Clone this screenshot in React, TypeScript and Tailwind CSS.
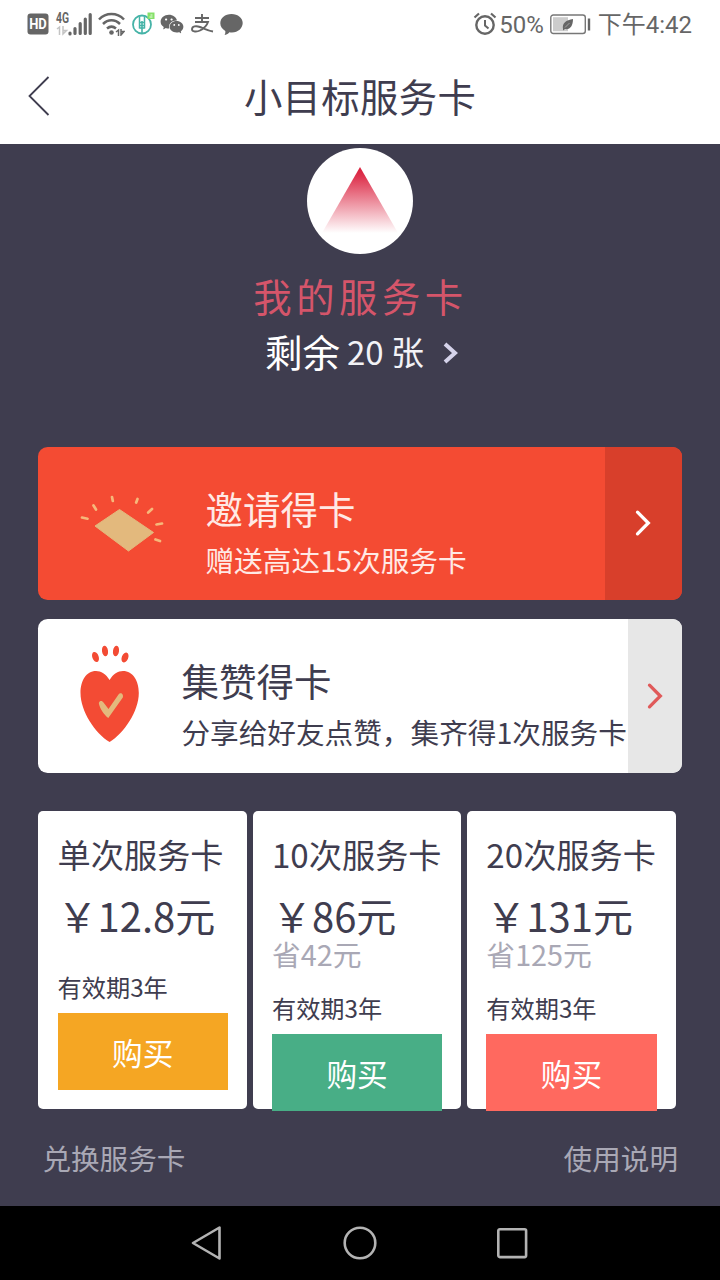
import { AiFillWechat } from "react-icons/ai";
import { clsx } from "clsx";

interface Plan {
  name: string;
  price: string;
  saving?: string;
  buttonClass: string;
}

const plans: Plan[] = [
  { name: "单次服务卡", price: "￥12.8元", buttonClass: "bg-[#f5a623]" },
  { name: "10次服务卡", price: "￥86元", saving: "省42元", buttonClass: "bg-[#48ae86]" },
  { name: "20次服务卡", price: "￥131元", saving: "省125元", buttonClass: "bg-[#ff695f]" },
];

function StatusBar() {
  return (
    <div className="flex h-12 shrink-0 items-center justify-between pr-7 pl-[27px] text-[#666]">
      <div className="flex items-center">
        <svg width="22" height="22" viewBox="0 0 22 22">
          <rect x="0.5" y="0.5" width="21" height="21" rx="3" fill="#666" />
          <text
            x="2.2"
            y="16"
            textLength="17.6"
            lengthAdjust="spacingAndGlyphs"
            fontFamily="Roboto, sans-serif"
            fontSize="14.5"
            fontWeight="700"
            fill="#fff"
          >
            HD
          </text>
        </svg>
        <svg className="ml-[7px] overflow-visible" width="37" height="26" viewBox="0 0 37 26">
          <text
            x="0"
            y="12"
            textLength="13"
            lengthAdjust="spacingAndGlyphs"
            fontFamily="Roboto, sans-serif"
            fontSize="15"
            fontWeight="700"
            fill="#666"
          >
            4G
          </text>
          <path d="M1 18l2.5-2v8M7 15v8l3.5-3.5H7" fill="none" stroke="#c4c4c4" strokeWidth="1.5" />
          <path
            d="M14 22v1M19 17.5V22.5M24.2 12.5V22.5M29.3 8V22.5M34.2 3.5V22.5"
            stroke="#666"
            strokeWidth="3.2"
            strokeLinecap="round"
          />
        </svg>
        <svg className="ml-[5px]" width="27" height="24" viewBox="0 0 27 24">
          <g fill="none" stroke="#666" strokeWidth="2.5">
            <path d="M1 7.5C8 .2 19 .2 26 7.5" />
            <path d="M5 12C10 7 17 7 22 12" />
            <path d="M9 16.5C12 14 15 14 18 16.5" />
          </g>
          <circle cx="13.5" cy="20.5" r="2.3" fill="#666" />
          <path d="M18 20l2.5-2v6M23 17v6l3-3.5h-3" fill="none" stroke="#666" strokeWidth="1.5" />
        </svg>
        <svg className="ml-[7px]" width="23" height="24" viewBox="0 0 23 24">
          <circle cx="10" cy="12.5" r="9" fill="none" stroke="#45b3a7" strokeWidth="1.8" />
          <path d="M7.5 4.5v12M12.5 4.5v12" stroke="#45b3a7" strokeWidth="1.5" />
          <path d="M7.5 10.5h5M7.5 13.5h5M7.5 16h5M10 9v12" stroke="#45b3a7" strokeWidth="1.6" />
          <rect x="15.5" y="0.5" width="7" height="6.5" fill="#86e06a" />
          <path d="M17.5 5h3M18.5 3h2" stroke="#e9ffe0" strokeWidth="1" />
        </svg>
        <AiFillWechat className="ml-[4px] size-[26px]" />
        <svg className="ml-[5px]" width="24" height="20" viewBox="0 0 24 20">
          <path
            d="M5 4h14M12 0v8M5 8h13c-1 3-4 6.5-8 8.5-3 1.5-8 1.5-8-1.3 0-3 4-3.7 8-2.2 4 1.5 8 3.5 13 4.5"
            fill="none"
            stroke="#666"
            strokeWidth="1.9"
          />
        </svg>
        <svg className="ml-[6px]" width="23" height="23" viewBox="0 0 23 23">
          <path
            d="M11.5 1C18 1 22.7 5 22.7 10S18 19.5 12 19.5c-1 0-1.8 0-2.6-.2C8 21 6 22 4.5 22c.8-1 1-2.5.8-4C2 16 .3 13.5.3 10.3.3 5 5 1 11.5 1z"
            fill="#666"
          />
        </svg>
      </div>
      <div className="flex items-center font-[Roboto,'Noto_Sans_CJK_SC',sans-serif] text-2xl leading-none">
        <svg width="24" height="24" viewBox="0 0 24 24" fill="none" stroke="#666">
          <circle cx="12" cy="13" r="8.7" strokeWidth="2.4" />
          <path d="M12 8v5.5l3.5 3" strokeWidth="2" />
          <path d="M1.5 5.5L6 1.5M22.5 5.5L18 1.5" strokeWidth="2.2" />
        </svg>
        <span className="mt-0.5 ml-0.5">50%</span>
        <svg className="ml-[6px]" width="41" height="21" viewBox="0 0 41 21">
          <rect x="0.8" y="1" width="34.5" height="18.5" rx="2.5" fill="none" stroke="#777" strokeWidth="1.4" />
          <rect x="3" y="3.2" width="15" height="14" fill="#ccc" />
          <path d="M13 15c-1-6 3-9 10-10 0 7-3 11-8 10l-2 1.5z" fill="#666" />
          <path d="M15 13.5l4.500-4.500" stroke="#ccc" strokeWidth="0.6" />
          <path d="M39 4.5v12" stroke="#666" strokeWidth="2.4" />
        </svg>
        <span className="mt-[2px] ml-[7px]">下午4:42</span>
      </div>
    </div>
  );
}

function Chevron() {
  return (
    <svg width="16" height="28" viewBox="0 0 16 28">
      <path
        d="M2.5 3.2L13.3 14L2.5 24.8"
        fill="none"
        stroke="currentColor"
        strokeWidth="3.3"
        strokeLinecap="round"
      />
    </svg>
  );
}

function GiftIcon() {
  return (
    <svg width="84" height="58" viewBox="0 0 84 58">
      <path
        d="M39.5 14.5L73.5 37.5L48.5 56L15 31Z"
        fill="#e3b97d"
        stroke="#e3b97d"
        strokeWidth="1"
        strokeLinejoin="round"
      />
      <path
        d="M2 22.5l5.5 1.2M13.5 10.5l2.5 4M32 2l.8 4M57.5 4l-1.3 3.5M72 14l-3.8 3.5M82 28.5l-5.5 1M75.5 44.5l4.5 1.5"
        stroke="#f6b87a"
        strokeWidth="2.7"
        strokeLinecap="round"
      />
    </svg>
  );
}

function HeartIcon() {
  return (
    <svg width="60" height="98" viewBox="0 0 60 98">
      <g fill="#f34b34">
        <ellipse cx="15.5" cy="12" rx="3.2" ry="5.2" transform="rotate(-20 15.5 12)" />
        <ellipse cx="25" cy="6" rx="3" ry="5.3" transform="rotate(-8 25 6)" />
        <ellipse cx="36" cy="6" rx="3" ry="5.3" transform="rotate(8 36 6)" />
        <ellipse cx="45" cy="12.5" rx="3.2" ry="5.2" transform="rotate(22 45 12.5)" />
        <path d="M29.6 35C26 29 21 26 16 26 6 26 .5 36 .5 48 .5 66 15 88.5 29.6 97 44 88.5 58.8 66 58.8 48 58.8 36 53 26 43 26 38 26 33 29 29.6 35Z" />
      </g>
      <path
        d="M18.800 58C19.500 55 22.500 55.500 23.500 57.500L28.500 64L38.500 49.500C40.500 46.500 44 49 42.800 52.500L28.300 73C24 70 19.500 63 18.800 58Z"
        fill="#e3b97d"
      />
    </svg>
  );
}

function PlanCard({ plan }: { plan: Plan }) {
  return (
    <div className="h-[297.5px] w-[208.7px] rounded-[5px] bg-white px-[19.2px] text-[#3f3d4f]">
      <div className="pt-[18px] text-[33.2px] leading-[50px] whitespace-nowrap">{plan.name}</div>
      <div className="mt-[17px] text-[40px] leading-[38px] whitespace-nowrap">{plan.price}</div>
      {plan.saving ? (
        <div className="mt-[4.5px] h-[30px] text-[28.8px] leading-[30px] text-[#a9a8b5]">{plan.saving}</div>
      ) : null}
      <div className={clsx("text-[24.2px] leading-[36px]", plan.saving ? "mt-[21.5px]" : "mt-[35px]")}>
        有效期3年
      </div>
      <button
        type="button"
        className={clsx(
          "mt-[7.5px] block h-[76.8px] w-[170.3px] pt-px text-[30.7px] leading-[76px] text-white",
          plan.buttonClass,
        )}
      >
        购买
      </button>
    </div>
  );
}

export default function App() {
  return (
    <div className="flex h-[1280px] w-[720px] flex-col overflow-hidden bg-white font-['Noto_Sans_CJK_SC',sans-serif]">
      <StatusBar />
      <header className="grid h-24 shrink-0 grid-cols-[60px_1fr_60px] items-center text-[#3f3d4f]">
        <svg className="ml-[27px]" width="24" height="42" viewBox="0 0 24 42">
          <path d="M21.5 2L2.5 21L21.5 40" fill="none" stroke="currentColor" strokeWidth="1.8" />
        </svg>
        <h1 className="-mt-[3px] text-center text-[38.4px] leading-[56px] tracking-[0.3px]">小目标服务卡</h1>
      </header>

      <main className="flex flex-1 flex-col bg-[#3f3d4f] pl-[38.4px]">
        <section className="mr-[38.4px] flex h-[302.5px] flex-col items-center pt-[3.5px]">
          <svg width="106" height="106" viewBox="0 0 106 106">
            <defs>
              <linearGradient id="peak" x1="0" y1="0" x2="0" y2="1">
                <stop offset="0" stopColor="#d91c3a" />
                <stop offset="0.15" stopColor="#de3550" />
                <stop offset="1" stopColor="#fff" />
              </linearGradient>
            </defs>
            <circle cx="53" cy="53" r="53" fill="#fff" />
            <path d="M53 19L91 85H15Z" fill="url(#peak)" />
          </svg>
          <h2 className="mt-[14px] pl-px text-[38.4px] leading-[54px] tracking-[4.5px] text-[#d5556a]">
            我的服务卡
          </h2>
          <div className="mt-[1.5px] flex items-center pl-[5px] text-white">
            <span className="text-[37.5px] leading-[56px]">剩余</span>
            <span className="ml-[7px] text-[33px] leading-[54px] text-[#f2f2f6]">20 张</span>
            <svg className="mt-[3px] ml-[18px]" width="18" height="24" viewBox="0 0 18 24">
              <path d="M3 3L13 12L3 21" fill="none" stroke="#d5d3ea" strokeWidth="4" />
            </svg>
          </div>
        </section>

        <div className="flex h-[153.6px] w-[643.2px] shrink-0 overflow-hidden rounded-[9.6px] bg-[#f44b33] text-[#ffe9e5]">
          <div className="mt-[48px] ml-[42px] w-[125px]">
            <GiftIcon />
          </div>
          <div className="flex-1 pt-[33px]">
            <div className="text-[37.5px] leading-[56px]">邀请得卡</div>
            <div className="mt-[2px] text-[28.7px] leading-[44px]">赠送高达15次服务卡</div>
          </div>
          <div className="flex w-[76.8px] items-center justify-center bg-[#d83f2b] text-white">
            <Chevron />
          </div>
        </div>

        <div className="mt-[19.2px] flex h-[153.6px] w-[643.2px] shrink-0 overflow-hidden rounded-[9.6px] bg-white text-[#3f3d4f]">
          <div className="mt-[26px] ml-[41.5px] w-[101.5px]">
            <HeartIcon />
          </div>
          <div className="flex-1 pt-[33px] whitespace-nowrap">
            <div className="text-[37.5px] leading-[56px]">集赞得卡</div>
            <div className="mt-[2px] text-[28.65px] leading-[44px]">分享给好友点赞，集齐得1次服务卡</div>
          </div>
          <div className="flex w-[54px] items-center justify-center bg-[#e7e7e7] text-[#e05a5a]">
            <Chevron />
          </div>
        </div>

        <div className="mt-[38.4px] flex gap-[5.7px]">
          {plans.map((plan) => (
            <PlanCard key={plan.name} plan={plan} />
          ))}
        </div>

        <footer className="mt-[28px] mr-[42px] ml-[4px] flex justify-between text-[28.6px] leading-[42px] text-[#a9a8b5]">
          <span>兑换服务卡</span>
          <span>使用说明</span>
        </footer>
      </main>

      <nav className="flex h-[74px] shrink-0 items-center bg-black pl-[190px]">
        <svg width="34" height="36" viewBox="0 0 34 36" fill="none" stroke="#b3b3b3" strokeWidth="2.6">
          <path d="M29.5 2.5V33.5L3 18Z" strokeLinejoin="round" />
        </svg>
        <svg className="ml-[119px]" width="34" height="34" viewBox="0 0 34 34" fill="none" stroke="#b3b3b3" strokeWidth="2.6">
          <circle cx="17" cy="17" r="15.3" />
        </svg>
        <svg className="ml-[118px]" width="34" height="34" viewBox="0 0 34 34" fill="none" stroke="#b3b3b3" strokeWidth="2.6">
          <rect x="3.3" y="3.3" width="27.8" height="27.8" rx="1.5" />
        </svg>
      </nav>
    </div>
  );
}
